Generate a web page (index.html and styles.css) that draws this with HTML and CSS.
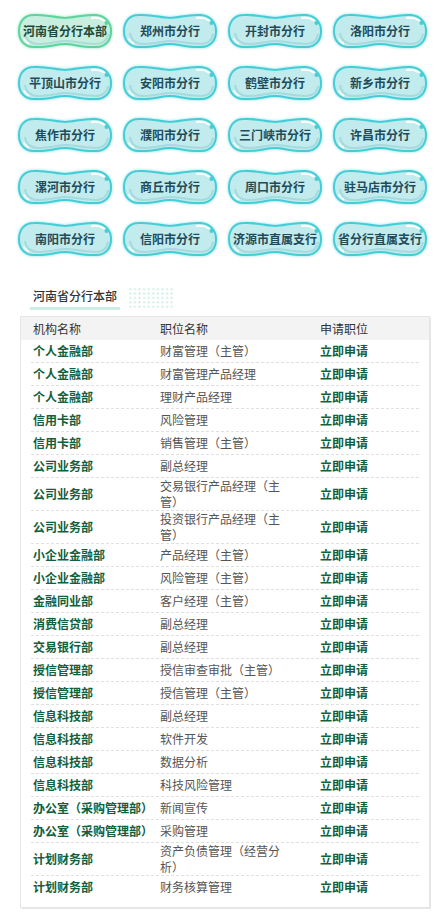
FILE: index.html
```html
<!DOCTYPE html>
<html lang="zh-CN">
<head>
  <meta charset="UTF-8">
  <meta name="viewport" content="width=device-width, initial-scale=1.0">
  <title>河南省分行招聘</title>
  <link rel="stylesheet" href="styles.css">
</head>
<body>

  <svg class="defs" width="0" height="0" aria-hidden="true">
    <symbol id="pill" viewBox="0 0 94 36">
      <path d="M16 2 C28 1 38 5 47 5 C56 5 66 1 78 2 C88 3 93 10 93 18 C93 27 88 34 78 34 C66 35 56 31 47 31 C38 31 28 35 16 34 C6 34 1 27 1 18 C1 9 6 2 16 2 Z"/>
      <path d="M7 20 C8 27 13 31 20 31 C32 31 40 28 47 28 C56 28 66 31 78 31 C85 31 89 27 90 21" fill="none" stroke="rgba(80,170,180,0.25)" stroke-width="2"/>
      <path d="M74 5 C79 4.5 83 5.5 86 7.5" fill="none" stroke="#fff" stroke-width="2" stroke-linecap="round"/>
      <circle cx="88.5" cy="10" r="1" fill="#fff"/>
      <path d="M6 26 C7 28 8.5 29.5 10.5 30.5" fill="none" stroke="#fff" stroke-width="1.6" stroke-linecap="round"/>
    </symbol>
  </svg>

  <div class="branches">
    <a class="branch active"><svg class="blob"><use href="#pill"/></svg><span>河南省分行本部</span></a>
    <a class="branch"><svg class="blob"><use href="#pill"/></svg><span>郑州市分行</span></a>
    <a class="branch"><svg class="blob"><use href="#pill"/></svg><span>开封市分行</span></a>
    <a class="branch"><svg class="blob"><use href="#pill"/></svg><span>洛阳市分行</span></a>
    <a class="branch"><svg class="blob"><use href="#pill"/></svg><span>平顶山市分行</span></a>
    <a class="branch"><svg class="blob"><use href="#pill"/></svg><span>安阳市分行</span></a>
    <a class="branch"><svg class="blob"><use href="#pill"/></svg><span>鹤壁市分行</span></a>
    <a class="branch"><svg class="blob"><use href="#pill"/></svg><span>新乡市分行</span></a>
    <a class="branch"><svg class="blob"><use href="#pill"/></svg><span>焦作市分行</span></a>
    <a class="branch"><svg class="blob"><use href="#pill"/></svg><span>濮阳市分行</span></a>
    <a class="branch"><svg class="blob"><use href="#pill"/></svg><span>三门峡市分行</span></a>
    <a class="branch"><svg class="blob"><use href="#pill"/></svg><span>许昌市分行</span></a>
    <a class="branch"><svg class="blob"><use href="#pill"/></svg><span>漯河市分行</span></a>
    <a class="branch"><svg class="blob"><use href="#pill"/></svg><span>商丘市分行</span></a>
    <a class="branch"><svg class="blob"><use href="#pill"/></svg><span>周口市分行</span></a>
    <a class="branch"><svg class="blob"><use href="#pill"/></svg><span>驻马店市分行</span></a>
    <a class="branch"><svg class="blob"><use href="#pill"/></svg><span>南阳市分行</span></a>
    <a class="branch"><svg class="blob"><use href="#pill"/></svg><span>信阳市分行</span></a>
    <a class="branch"><svg class="blob"><use href="#pill"/></svg><span>济源市直属支行</span></a>
    <a class="branch"><svg class="blob"><use href="#pill"/></svg><span>省分行直属支行</span></a>
  </div>

  <div class="section-title">
    <h2>河南省分行本部</h2>
    <div class="dots"></div>
  </div>

  <div class="jobs">
    <div class="jobs-head">
      <span>机构名称</span>
      <span>职位名称</span>
      <span>申请职位</span>
    </div>
    <div class="jobs-list">
      <div class="job"><span class="dept">个人金融部</span><span class="title">财富管理（主管）</span><a class="apply">立即申请</a></div>
      <div class="job"><span class="dept">个人金融部</span><span class="title">财富管理产品经理</span><a class="apply">立即申请</a></div>
      <div class="job"><span class="dept">个人金融部</span><span class="title">理财产品经理</span><a class="apply">立即申请</a></div>
      <div class="job"><span class="dept">信用卡部</span><span class="title">风险管理</span><a class="apply">立即申请</a></div>
      <div class="job"><span class="dept">信用卡部</span><span class="title">销售管理（主管）</span><a class="apply">立即申请</a></div>
      <div class="job"><span class="dept">公司业务部</span><span class="title">副总经理</span><a class="apply">立即申请</a></div>
      <div class="job"><span class="dept">公司业务部</span><span class="title">交易银行产品经理（主管）</span><a class="apply">立即申请</a></div>
      <div class="job"><span class="dept">公司业务部</span><span class="title">投资银行产品经理（主管）</span><a class="apply">立即申请</a></div>
      <div class="job"><span class="dept">小企业金融部</span><span class="title">产品经理（主管）</span><a class="apply">立即申请</a></div>
      <div class="job"><span class="dept">小企业金融部</span><span class="title">风险管理（主管）</span><a class="apply">立即申请</a></div>
      <div class="job"><span class="dept">金融同业部</span><span class="title">客户经理（主管）</span><a class="apply">立即申请</a></div>
      <div class="job"><span class="dept">消费信贷部</span><span class="title">副总经理</span><a class="apply">立即申请</a></div>
      <div class="job"><span class="dept">交易银行部</span><span class="title">副总经理</span><a class="apply">立即申请</a></div>
      <div class="job"><span class="dept">授信管理部</span><span class="title">授信审查审批（主管）</span><a class="apply">立即申请</a></div>
      <div class="job"><span class="dept">授信管理部</span><span class="title">授信管理（主管）</span><a class="apply">立即申请</a></div>
      <div class="job"><span class="dept">信息科技部</span><span class="title">副总经理</span><a class="apply">立即申请</a></div>
      <div class="job"><span class="dept">信息科技部</span><span class="title">软件开发</span><a class="apply">立即申请</a></div>
      <div class="job"><span class="dept">信息科技部</span><span class="title">数据分析</span><a class="apply">立即申请</a></div>
      <div class="job"><span class="dept">信息科技部</span><span class="title">科技风险管理</span><a class="apply">立即申请</a></div>
      <div class="job"><span class="dept">办公室（采购管理部）</span><span class="title">新闻宣传</span><a class="apply">立即申请</a></div>
      <div class="job"><span class="dept">办公室（采购管理部）</span><span class="title">采购管理</span><a class="apply">立即申请</a></div>
      <div class="job"><span class="dept">计划财务部</span><span class="title">资产负债管理（经营分析）</span><a class="apply">立即申请</a></div>
      <div class="job"><span class="dept">计划财务部</span><span class="title">财务核算管理</span><a class="apply">立即申请</a></div>
    </div>
  </div>

</body>
</html>
```

FILE: styles.css
```css
body {
  margin: 0;
  padding: 0 0 7px;
  background: #fff;
  font-family: "Noto Sans CJK SC", "Noto Sans", sans-serif;
  font-size: 12px;
  color: #333;
}

.defs {
  position: absolute;
  width: 0;
  height: 0;
}

/* branch buttons */
.branches {
  display: grid;
  grid-template-columns: repeat(4, 94px);
  column-gap: 11px;
  row-gap: 16px;
  padding: 13px 0 0 18px;
}

.branch {
  position: relative;
  display: flex;
  align-items: center;
  justify-content: center;
  width: 94px;
  height: 36px;
  cursor: pointer;
}

.branch .blob {
  position: absolute;
  top: 0;
  left: 0;
  width: 94px;
  height: 36px;
  overflow: visible;
  fill: #c2ebed;
  stroke: #45cdd6;
  stroke-width: 2;
  filter: drop-shadow(0 0 1.5px #86e0e6);
}

.branch span {
  position: relative;
  font-size: 12px;
  font-weight: bold;
  line-height: 16px;
  color: #1f4b5a;
  white-space: nowrap;
}

.branch.active .blob {
  fill: #c8eedf;
  stroke: #5bd49e;
  filter: drop-shadow(0 0 1.5px #8fe2bd);
}

.branch.active span {
  color: #1d4a3a;
}

/* section heading */
.section-title {
  display: flex;
  align-items: flex-end;
  margin: 30px 0 0 30px;
}

.section-title h2 {
  margin: 0;
  padding: 0 3px 3px;
  font-size: 12px;
  font-weight: 500;
  line-height: 16px;
  color: #333;
  border-bottom: 3px solid #cdeee5;
}

.dots {
  width: 46px;
  height: 21px;
  margin: 0 0 2px 8px;
  background-image: radial-gradient(#d3efe8 1px, transparent 1.2px);
  background-size: 4.6px 4.4px;
  background-position: 0 0;
}

/* job table */
.jobs {
  box-sizing: border-box;
  width: 410px;
  margin: 6px 0 0 20px;
  border: 1px solid #e6e6e6;
  box-shadow: 1px 1px 0 #e6e6e6;
}

.jobs-head {
  display: grid;
  grid-template-columns: 127px 160px 1fr;
  height: 23px;
  padding-left: 12px;
  line-height: 23px;
  background: #f3f3f3;
  color: #333;
}

.jobs-list {
  margin: 0 10px;
  padding-bottom: 9px;
}

.job {
  display: grid;
  grid-template-columns: 127px 160px 1fr;
  align-items: center;
  min-height: 22px;
  line-height: 16px;
  border-bottom: 1px dashed #e0e0e0;
}

.job:last-child {
  border-bottom: none;
}

.job .dept {
  padding-left: 2px;
  font-weight: bold;
  color: #11603d;
  white-space: nowrap;
}

.job .title {
  padding: 0 34px 0 2px;
  color: #555;
}

.job .apply {
  padding-left: 2px;
  font-weight: bold;
  color: #11603d;
  cursor: pointer;
}
```
